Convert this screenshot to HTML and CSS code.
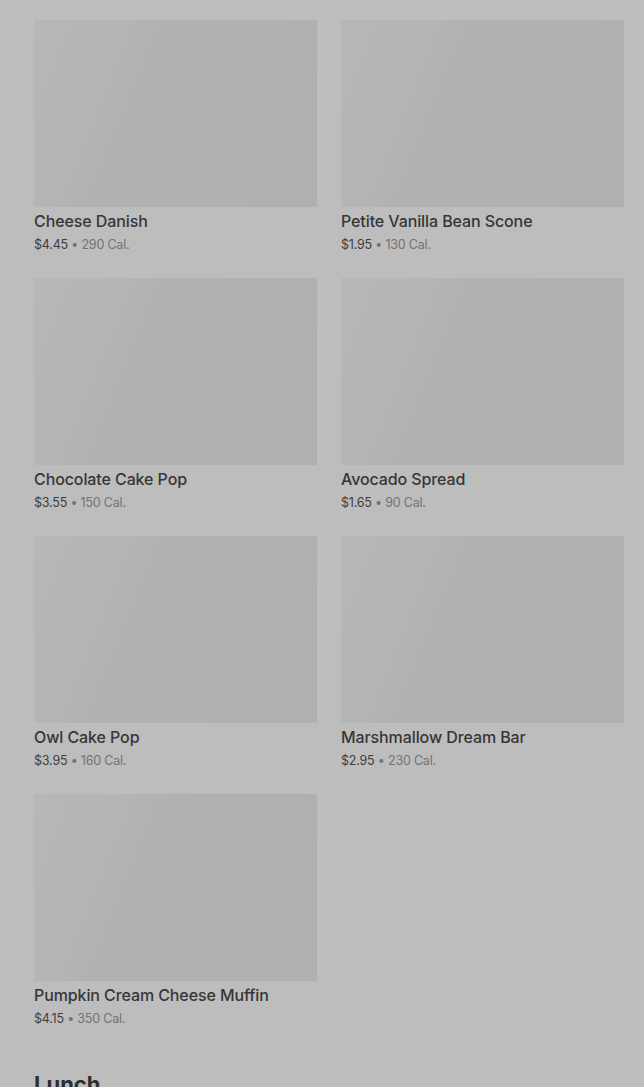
FILE: index.html
```html
<!DOCTYPE html>
<html>
<head>
<meta charset="utf-8">
<link rel="stylesheet" href="styles.css">
</head>
<body>
<main class="page">
  <section class="grid">
    <div class="card">
      <div class="thumb"></div>
      <div class="name">Cheese Danish</div>
      <div class="meta"><span class="price">$4.45</span> • 290 Cal.</div>
    </div>
    <div class="card">
      <div class="thumb"></div>
      <div class="name">Petite Vanilla Bean Scone</div>
      <div class="meta"><span class="price">$1.95</span> • 130 Cal.</div>
    </div>
    <div class="card">
      <div class="thumb"></div>
      <div class="name">Chocolate Cake Pop</div>
      <div class="meta"><span class="price">$3.55</span> • 150 Cal.</div>
    </div>
    <div class="card">
      <div class="thumb"></div>
      <div class="name">Avocado Spread</div>
      <div class="meta"><span class="price">$1.65</span> • 90 Cal.</div>
    </div>
    <div class="card">
      <div class="thumb"></div>
      <div class="name">Owl Cake Pop</div>
      <div class="meta"><span class="price">$3.95</span> • 160 Cal.</div>
    </div>
    <div class="card">
      <div class="thumb"></div>
      <div class="name">Marshmallow Dream Bar</div>
      <div class="meta"><span class="price">$2.95</span> • 230 Cal.</div>
    </div>
    <div class="card">
      <div class="thumb"></div>
      <div class="name">Pumpkin Cream Cheese Muffin</div>
      <div class="meta"><span class="price">$4.15</span> • 350 Cal.</div>
    </div>
  </section>
  <h2 class="section-title">Lunch</h2>
</main>
</body>
</html>
```
FILE: styles.css
```css
html, body {
  margin: 0;
  padding: 0;
  background: #bdbdbd;
  overflow: hidden;
}
.page {
  padding: 20px 20px 0 34px;
  font-family: Inter, "Noto Sans", sans-serif;
}
.grid {
  display: grid;
  grid-template-columns: 283px 283px;
  column-gap: 24px;
  row-gap: 24px;
}
.card {
  display: flex;
  flex-direction: column;
}
.thumb {
  height: 187px;
  background: linear-gradient(112deg, #b7b7b7 0%, #b5b5b5 25%, #b1b1b1 38%, #b0b0b0 100%);
}
.name {
  margin-top: 4px;
  font-size: 16px;
  line-height: 20px;
  font-weight: 500;
  letter-spacing: -0.1px;
  color: #363636;
}
.meta {
  margin-top: 5px;
  font-size: 12.5px;
  line-height: 18px;
  letter-spacing: -0.2px;
  color: #737373;
}
.price {
  color: #3d3d3d;
}
.section-title {
  margin: 40px 0 0;
  font-size: 22px;
  line-height: 32px;
  font-weight: 700;
  color: #2e2e2e;
}
```
